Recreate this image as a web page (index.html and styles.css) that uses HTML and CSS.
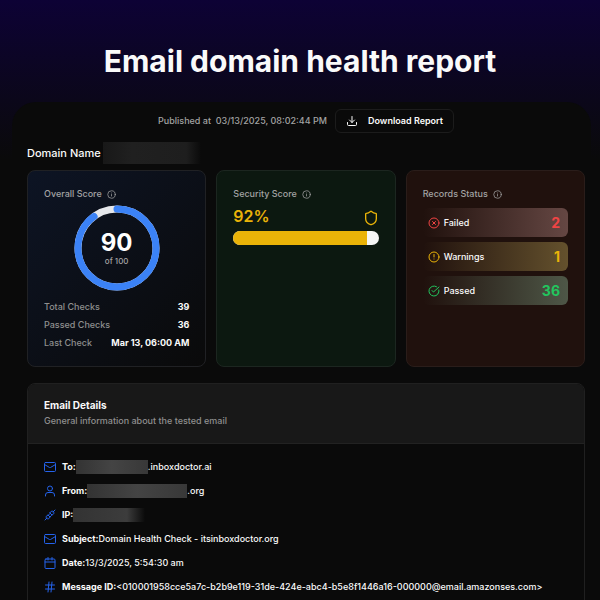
FILE: index.html
```html
<!DOCTYPE html>
<html lang="en">
<head>
    <meta charset="UTF-8">
    <meta name="viewport" content="width=device-width, initial-scale=1.0">
    <title>Email domain health report</title>
    <link rel="stylesheet" href="styles.css">
</head>
<body>
    <!-- Shared icons -->
    <svg class="sprite" aria-hidden="true">
        <symbol id="info" viewBox="0 0 24 24"><circle cx="12" cy="12" r="10"/><path d="M12 16v-4M12 8h.01"/></symbol>
        <symbol id="mail" viewBox="0 0 24 24"><rect x="1" y="3" width="22" height="18" rx="2"/><path d="m23 7-9.97 6a1.94 1.94 0 0 1-2.06 0L1 7"/></symbol>
    </svg>

    <h1>Email domain health report</h1>

    <main class="panel">
        <!-- Toolbar -->
        <div class="toolbar">
            <span class="published">Published at&nbsp; 03/13/2025, 08:02:44 PM</span>
            <button type="button" class="download">
                <svg class="icon" viewBox="0 0 24 24"><path d="M12 3v12M7 10l5 5 5-5M3 15v4a2 2 0 0 0 2 2h14a2 2 0 0 0 2-2v-4"/></svg>
                Download Report
            </button>
        </div>
        <div class="domain">Domain Name <span class="redacted redacted-domain"></span></div>

        <!-- Summary cards -->
        <div class="cards">
            <section class="card card-overall">
                <h2>Overall Score <svg class="info"><use href="#info"/></svg></h2>
                <div class="ring">
                    <svg viewBox="0 0 86 86">
                        <circle class="ring-track" cx="43" cy="43" r="39"/>
                        <circle class="ring-value" cx="43" cy="43" r="39" pathLength="100"/>
                    </svg>
                    <div class="ring-label">
                        <strong>90</strong>
                        <span>of 100</span>
                    </div>
                </div>
                <dl class="stats">
                    <div><dt>Total Checks</dt><dd>39</dd></div>
                    <div><dt>Passed Checks</dt><dd>36</dd></div>
                    <div><dt>Last Check</dt><dd>Mar 13, 06:00 AM</dd></div>
                </dl>
            </section>

            <section class="card card-security">
                <h2>Security Score <svg class="info"><use href="#info"/></svg></h2>
                <div class="security-row">
                    <span>92%</span>
                    <svg class="shield" viewBox="0 0 24 24"><path d="M20 13c0 5-3.500 7.500-7.660 8.950a1 1 0 0 1-.67-.01C7.500 20.500 4 18 4 13V6a1 1 0 0 1 1-1c2 0 4.500-1.200 6.240-2.720a1.170 1.170 0 0 1 1.520 0C14.510 3.810 17 5 19 5a1 1 0 0 1 1 1z"/></svg>
                </div>
                <div class="bar"><div class="bar-fill" style="width: 92%"></div></div>
            </section>

            <section class="card card-records">
                <h2>Records Status <svg class="info"><use href="#info"/></svg></h2>
                <ul class="records">
                    <li class="failed">
                        <svg class="icon" viewBox="0 0 24 24"><circle cx="12" cy="12" r="10"/><path d="m15 9-6 6M9 9l6 6"/></svg>
                        <span>Failed</span><strong>2</strong>
                    </li>
                    <li class="warnings">
                        <svg class="icon" viewBox="0 0 24 24"><circle cx="12" cy="12" r="10"/><path d="M12 7v5M12 16h.01"/></svg>
                        <span>Warnings</span><strong>1</strong>
                    </li>
                    <li class="passed">
                        <svg class="icon" viewBox="0 0 24 24"><path d="M21.800 10A10 10 0 1 1 17 3.335M8 11l3 3L22 4"/></svg>
                        <span>Passed</span><strong>36</strong>
                    </li>
                </ul>
            </section>
        </div>

        <!-- Email details -->
        <section class="details">
            <header>
                <h2>Email Details</h2>
                <p>General information about the tested email</p>
            </header>
            <ul>
                <li><svg class="icon"><use href="#mail"/></svg><b>To:</b><span class="redacted redacted-to"></span>.inboxdoctor.ai</li>
                <li><svg class="icon" viewBox="0 0 24 24"><path d="M21 22v-2a5 5 0 0 0-5-5H8a5 5 0 0 0-5 5v2"/><circle cx="12" cy="7" r="5"/></svg><b>From:</b><span class="redacted redacted-from"></span>.org</li>
                <li><svg class="icon" viewBox="0 0 24 24"><path d="m18 6 4-4M2 22l4-4M5 19c4 2 6 0 7-3L8 12c-3 1-5 3-3 7ZM8 13l3-3M12 16l3-3M12 8l4 4c3-1 5-3 3-7-4-2-6 0-7 3Z"/></svg><b>IP:</b><span class="redacted redacted-ip"></span></li>
                <li><svg class="icon"><use href="#mail"/></svg><b>Subject:</b>Domain Health Check - itsinboxdoctor.org</li>
                <li><svg class="icon" viewBox="0 0 24 24"><rect x="2" y="4" width="20" height="19" rx="2"/><path d="M8 1v5M16 1v5M2 10h20"/></svg><b>Date:</b>13/3/2025, 5:54:30 am</li>
                <li><svg class="icon" viewBox="0 0 24 24"><path d="M3 8h18M3 16h18M10 2 8 22M16 2l-2 20"/></svg><b>Message ID:</b>&lt;010001958cce5a7c-b2b9e119-31de-424e-abc4-b5e8f1446a16-000000@email.amazonses.com&gt;</li>
            </ul>
        </section>
    </main>
</body>
</html>
```
FILE: styles.css
```css
* {
    box-sizing: border-box;
}

/* Main Page Styling */
body {
    margin: 0;
    height: 100vh;
    overflow: hidden;
    background: #0a0a0a linear-gradient(#0d0235, #0a0a0a 160px) no-repeat;
    color: #fafafa;
    font-family: Inter, "Liberation Sans", sans-serif;
    font-size: 9px;
    font-weight: 500;
    line-height: 14px;
}

h1, h2, p, ul, dl, dd {
    margin: 0;
    padding: 0;
}

ul {
    list-style: none;
}

h1 {
    padding: 40px 0 20px;
    font-size: 30px;
    line-height: 42px;
    font-weight: 700;
    text-align: center;
}

svg {
    fill: none;
    stroke: currentColor;
    stroke-width: 2;
    stroke-linecap: round;
    stroke-linejoin: round;
    flex-shrink: 0;
}

.sprite {
    display: none;
}

.icon {
    width: 12px;
    height: 12px;
}

.info {
    width: 9px;
    height: 9px;
}

.panel {
    margin: 0 9px 0 12px;
    padding: 7px 6px 0 15px;
    background: #0a0a0a;
    border-radius: 24px 24px 0 0;
}

/* Toolbar */
.toolbar {
    display: flex;
    align-items: center;
    justify-content: center;
    gap: 8px;
}

.published {
    color: #a3a3a3;
}

.download {
    display: flex;
    align-items: center;
    gap: 10px;
    height: 24px;
    padding: 0 10px;
    background: transparent;
    border: 1px solid #1c1c1c;
    border-radius: 6px;
    color: #fafafa;
    font: inherit;
    font-weight: 600;
}

.domain {
    display: flex;
    align-items: center;
    gap: 2px;
    height: 22px;
    margin: 9px 0 6px;
    font-size: 11px;
    font-weight: 500;
}

/* Hidden values */
.redacted {
    height: 14px;
    background: linear-gradient(90deg, #333, #444 50%, #383838);
}

.redacted-domain {
    width: 98px;
    height: 22px;
    background: linear-gradient(90deg, #181818, #202020 30%, #1e1e1e 85%, #0a0a0a);
}

.redacted-to {
    width: 72px;
}

.redacted-from {
    width: 100px;
}

.redacted-ip {
    width: 72px;
    background: linear-gradient(90deg, #333, #3c3c3c 75%, #0a0a0a);
}

/* Summary cards */
.cards {
    display: grid;
    grid-template-columns: repeat(3, 1fr);
    gap: 10px;
}

.card {
    padding: 16px;
    border: 1px solid #202124;
    border-radius: 8px;
}

.card h2 {
    display: flex;
    align-items: center;
    gap: 5px;
    color: #a3a3a3;
    font-size: 9px;
    font-weight: 500;
}

.card-overall {
    background: linear-gradient(135deg, #0d1424, #0a0a0a);
}

.card-security {
    background: #0c1810;
    border-color: #1c2620;
}

.card-records {
    background: #20110d;
    border-color: #2a1d1a;
}

.ring {
    display: grid;
    place-items: center;
    margin-top: 4px;
}

.ring > * {
    grid-area: 1 / 1;
}

.ring svg {
    width: 86px;
    height: 86px;
    transform: rotate(-90deg);
    stroke-width: 7;
}

.ring-track {
    stroke: #e5e7eb;
}

.ring-value {
    stroke: #3b82f6;
    stroke-dasharray: 90 100;
}

.ring-label {
    display: flex;
    flex-direction: column;
    align-items: center;
    color: #a3a3a3;
    font-size: 8px;
    line-height: 12px;
}

.ring-label strong {
    color: #fff;
    font-size: 24px;
    line-height: 25px;
}

.stats {
    display: grid;
    gap: 4px;
    margin-top: 9px;
}

.stats div {
    display: flex;
    justify-content: space-between;
}

.stats dt {
    color: #8f8f8f;
}

.stats dd {
    font-weight: 700;
}

.security-row {
    display: flex;
    align-items: center;
    justify-content: space-between;
    height: 30px;
    color: #eab308;
    font-size: 16px;
    font-weight: 600;
}

.shield {
    width: 16px;
    height: 16px;
    margin-top: 4px;
}

.bar {
    height: 14px;
    border-radius: 7px;
    background: #f5f5f5;
    overflow: hidden;
}

.bar-fill {
    height: 100%;
    background: #eab308;
}

.records {
    display: grid;
    gap: 5px;
    margin-top: 7px;
}

.records li {
    display: flex;
    align-items: center;
    gap: 4px;
    height: 29px;
    padding: 0 8px 0 5px;
    border-radius: 6px;
    font-weight: 500;
}

.records strong {
    margin-left: auto;
    font-size: 14px;
}

.failed {
    background: linear-gradient(90deg, transparent, #654743);
}

.warnings {
    background: linear-gradient(90deg, transparent, #64512d);
}

.passed {
    background: linear-gradient(90deg, transparent, #4e5747);
}

.failed .icon, .failed strong {
    color: #ef4444;
}

.warnings .icon, .warnings strong {
    color: #eab308;
}

.passed .icon, .passed strong {
    color: #22c55e;
}

/* Email details */
.details {
    margin-top: 16px;
    border: 1px solid #202020;
    border-radius: 8px;
    overflow: hidden;
}

.details header {
    padding: 13px 16px 14px;
    background: #181818;
    border-bottom: 1px solid #222;
}

.details h2 {
    font-size: 10px;
    line-height: 16px;
    font-weight: 700;
}

.details p {
    color: #8f8f8f;
    line-height: 16px;
}

.details ul {
    display: grid;
    gap: 10px;
    padding: 16px;
}

.details li {
    display: flex;
    align-items: center;
    white-space: nowrap;
}

.details b {
    font-weight: 700;
}

.details .icon {
    margin-right: 6px;
    color: #2563eb;
}
```
